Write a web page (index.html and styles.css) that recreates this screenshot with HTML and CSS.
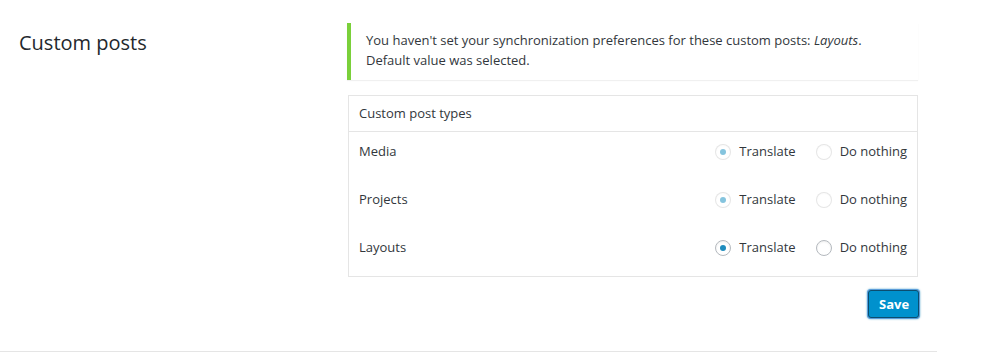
FILE: index.html
```html
<!DOCTYPE html>
<html lang="en">
<head>
<meta charset="utf-8">
<title>Custom posts</title>
<link rel="stylesheet" href="styles.css">
</head>
<body>
<div class="section">
  <div class="label-col">
    <h2 class="section-title">Custom posts</h2>
  </div>
  <div class="content-col">
    <div class="notice">
      <p>You haven't set your synchronization preferences for these custom posts: <em>Layouts</em>.<br>Default value was selected.</p>
    </div>
    <div class="box">
      <div class="box-head">Custom post types</div>
      <div class="box-body">
        <div class="row">
          <span class="row-name">Media</span>
          <div class="choices">
            <label class="choice disabled"><span class="radio checked"></span>Translate</label>
            <label class="choice disabled"><span class="radio"></span>Do nothing</label>
          </div>
        </div>
        <div class="row">
          <span class="row-name">Projects</span>
          <div class="choices">
            <label class="choice disabled"><span class="radio checked"></span>Translate</label>
            <label class="choice disabled"><span class="radio"></span>Do nothing</label>
          </div>
        </div>
        <div class="row">
          <span class="row-name">Layouts</span>
          <div class="choices">
            <label class="choice"><span class="radio checked"></span>Translate</label>
            <label class="choice"><span class="radio"></span>Do nothing</label>
          </div>
        </div>
      </div>
    </div>
    <div class="actions">
      <button class="button-primary" type="button">Save</button>
    </div>
  </div>
</div>
</body>
</html>
```

FILE: styles.css
```css
html, body {
  margin: 0;
  padding: 0;
  background: #ffffff;
}

body {
  font-family: "Open Sans", "Liberation Sans", sans-serif;
  font-size: 13px;
  line-height: 1.5;
  color: #444444;
}

.section {
  display: flex;
  width: 937px;
  padding: 23px 0 33px 0;
  border-bottom: 1px solid #e5e5e5;
  box-sizing: border-box;
  height: 352px;
}

.label-col {
  width: 347px;
  flex: none;
  padding-left: 19px;
  box-sizing: border-box;
}

.section-title {
  margin: 6px 0 0 0;
  font-size: 20px;
  line-height: 27px;
  font-weight: 400;
  color: #23282d;
}

.content-col {
  width: 571px;
  flex: none;
  display: flex;
  flex-direction: column;
}

.notice {
  border-left: 4px solid #7ad03a;
  background: #ffffff;
  box-shadow: 0 1px 1px rgba(0, 0, 0, 0.06);
  padding: 8px 12px 10px 15px;
}

.notice p {
  margin: 0;
  color: #32373c;
}

.box {
  margin-top: 15px;
  margin-left: 1px;
  width: 570px;
  box-sizing: border-box;
  border: 1px solid #e5e5e5;
  background: #ffffff;
}

.box-head {
  height: 36px;
  box-sizing: border-box;
  padding: 8px 10px;
  border-bottom: 1px solid #e5e5e5;
  color: #32373c;
}

.row {
  display: flex;
  justify-content: space-between;
  align-items: flex-start;
  height: 48px;
  box-sizing: border-box;
  padding: 10px 10px 0 10px;
}

.row-name {
  color: #32373c;
}

.choices {
  display: flex;
  gap: 20px;
}

.choice {
  display: flex;
  align-items: center;
  gap: 8px;
  color: #32373c;
  height: 19.5px;
}

.radio {
  width: 16px;
  height: 16px;
  box-sizing: border-box;
  border-radius: 50%;
  border: 1px solid #b4b9be;
  background: #ffffff;
  box-shadow: inset 0 1px 2px rgba(0, 0, 0, 0.07);
  display: flex;
  align-items: center;
  justify-content: center;
}

.radio.checked::after {
  content: "";
  width: 6px;
  height: 6px;
  border-radius: 50%;
  background: #1e8cbe;
}

.choice.disabled .radio {
  border-color: rgba(222, 222, 222, 0.75);
  box-shadow: inset 0 1px 2px rgba(0, 0, 0, 0.02);
}

.choice.disabled .radio.checked::after {
  background: #85c4de;
}

.actions {
  display: flex;
  justify-content: flex-end;
  margin-top: 13px;
  margin-right: -1px;
}

.button-primary {
  height: 28px;
  width: 51px;
  padding: 0 10px 2px;
  font-family: "Open Sans", "Liberation Sans", sans-serif;
  font-size: 13px;
  font-weight: 700;
  line-height: 26px;
  color: #ffffff;
  background: #0091cd;
  border: 1px solid #0b4d6f;
  border-radius: 3px;
  box-shadow: 0 0 0 1px #5b9dd9, 0 0 2px 1px rgba(30, 140, 190, 0.8);
  cursor: pointer;
}
```
